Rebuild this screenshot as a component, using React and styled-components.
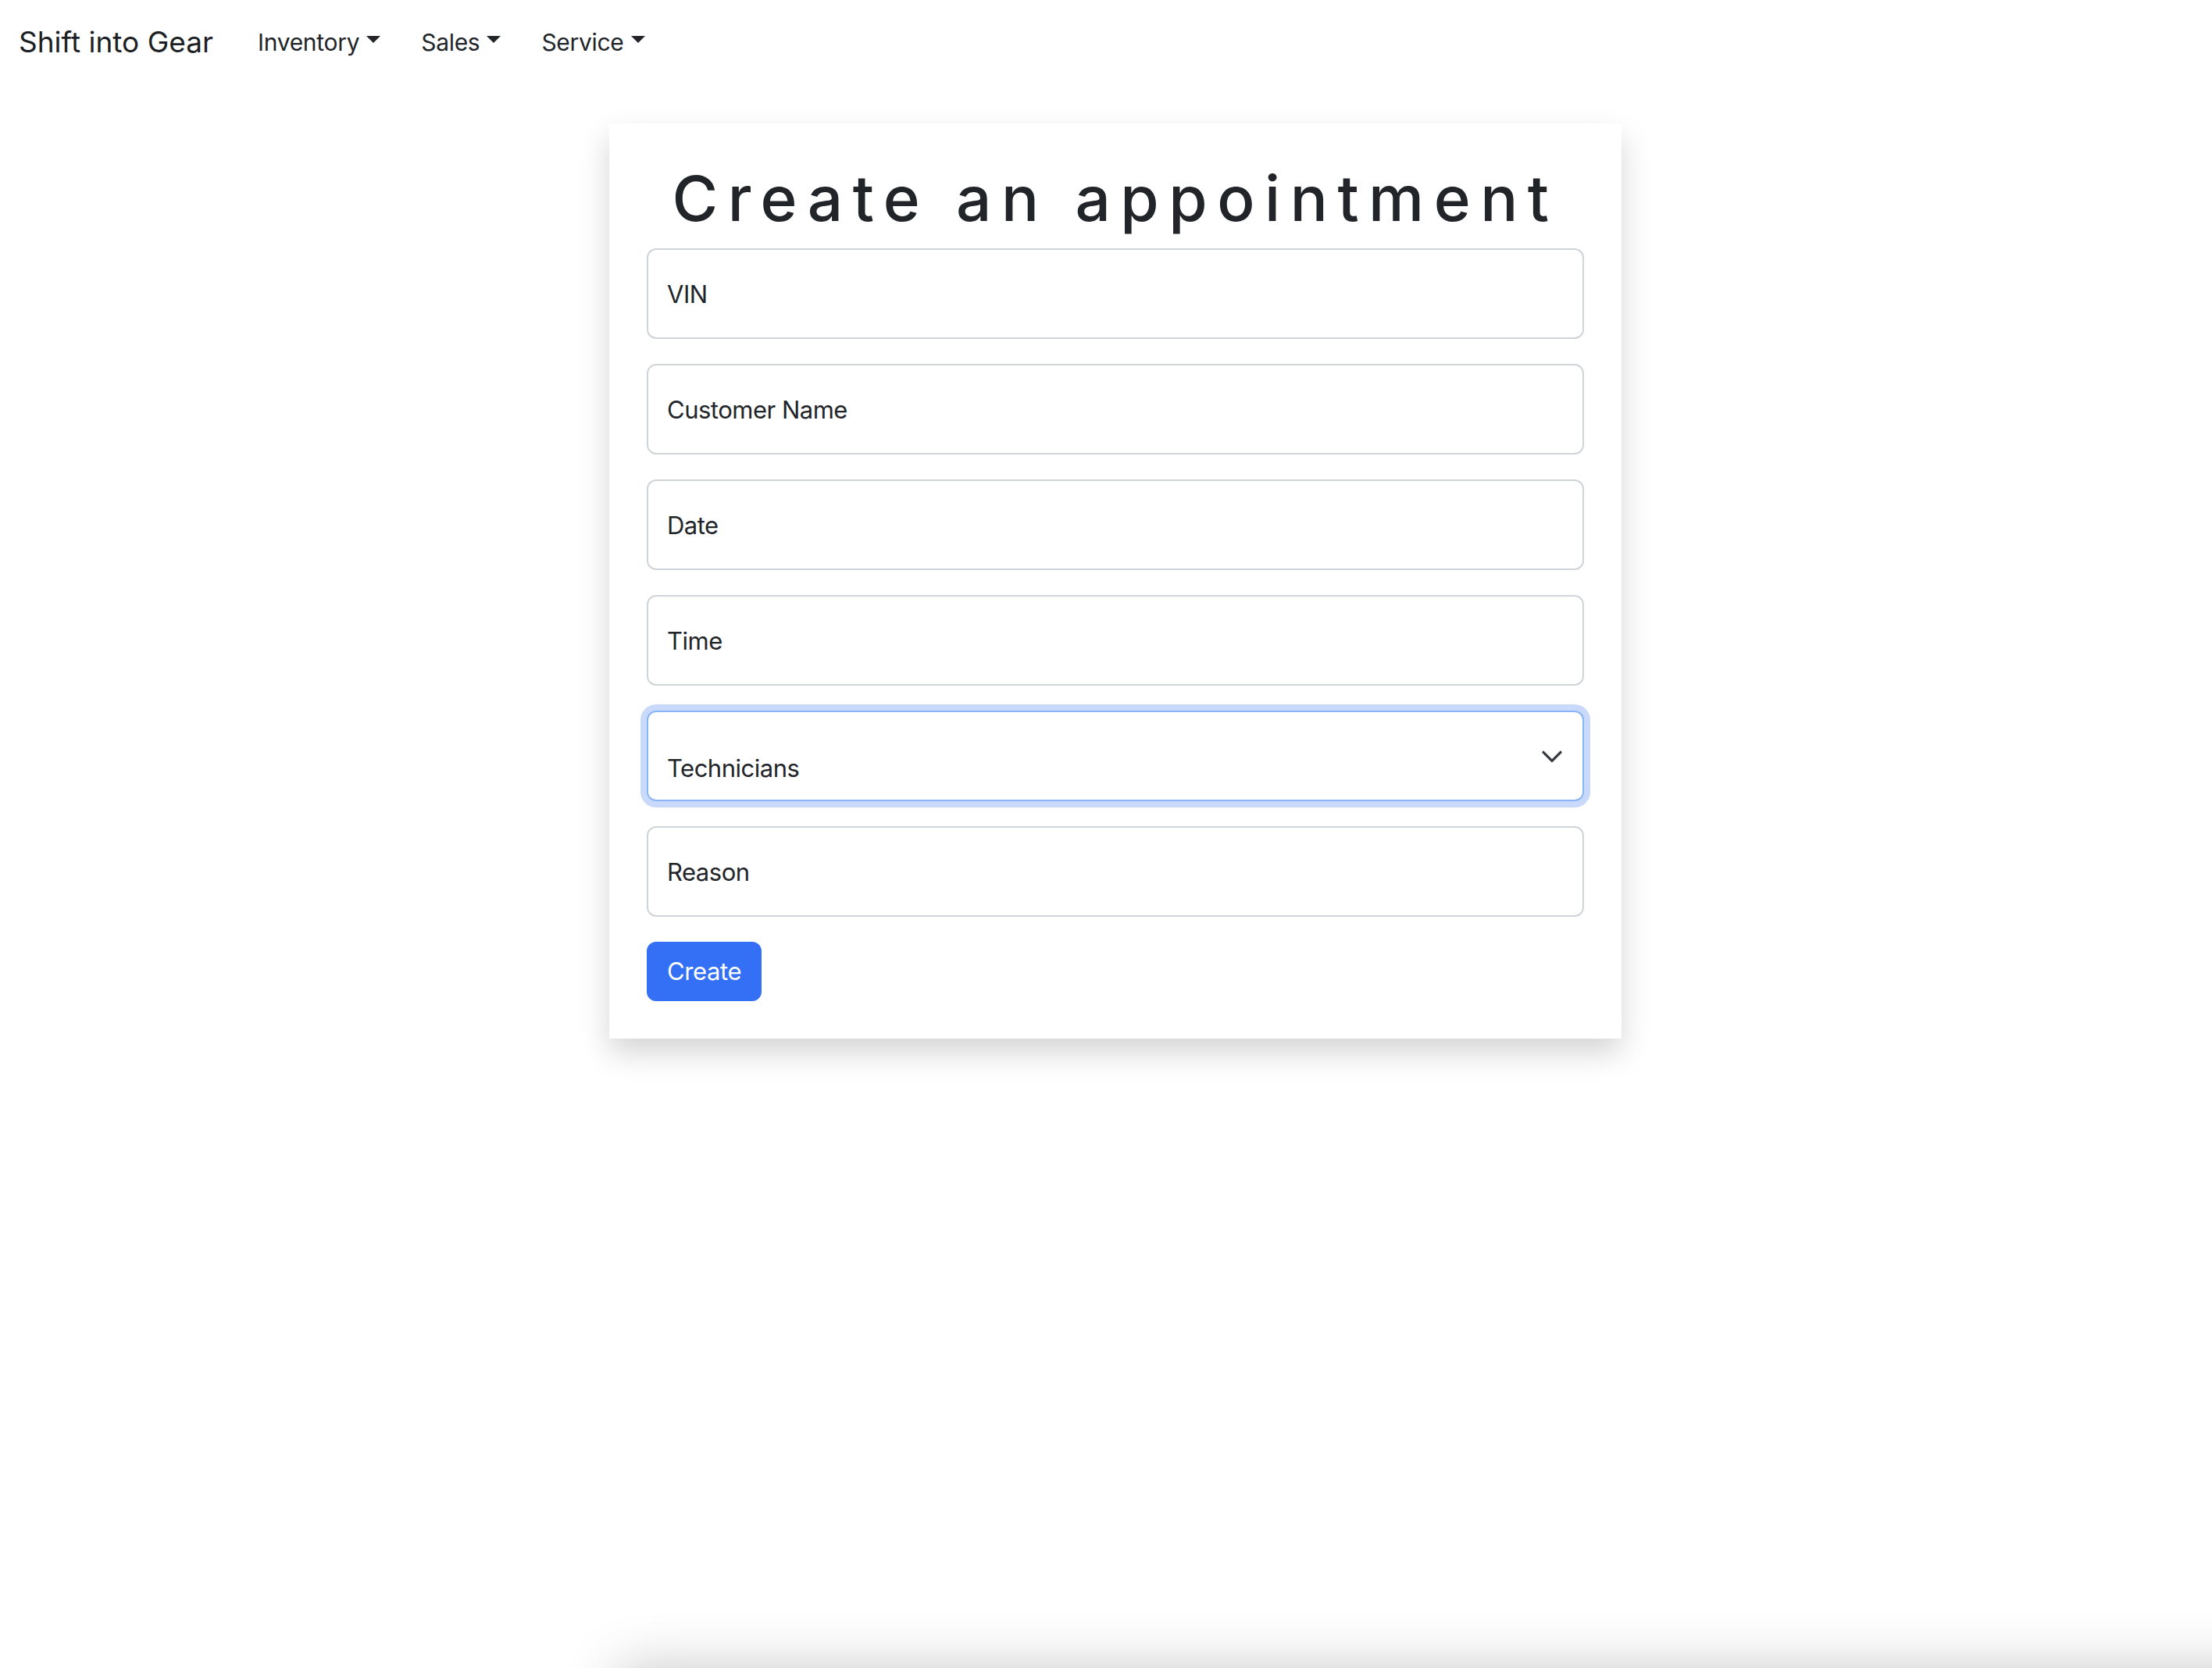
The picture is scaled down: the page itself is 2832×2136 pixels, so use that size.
import React from 'react';
import styled, { createGlobalStyle } from 'styled-components';

const GlobalStyle = createGlobalStyle`
  html, body {
    margin: 0;
    padding: 0;
    background: #fff;
    min-height: 100%;
  }
  body {
    font-family: Inter, "Liberation Sans", Arial, sans-serif;
    color: #212529;
  }
  * {
    box-sizing: border-box;
  }
`;

const navItems = ['Inventory', 'Sales', 'Service'];
const fields = ['VIN', 'Customer Name', 'Date', 'Time'];

const App = () => {
  return (
    <>
      <GlobalStyle />
      <Navbar>
        <Brand href="#">Shift into Gear</Brand>
        <NavList>
          {navItems.map((item) => (
            <li key={item}>
              <NavLink href="#">
                {item}
                <Caret />
              </NavLink>
            </li>
          ))}
        </NavList>
      </Navbar>

      <Main>
        <Card>
          <Title>Create an appointment</Title>
          <Form onSubmit={(e) => e.preventDefault()}>
            {fields.map((f) => (
              <TextField key={f} type="text" placeholder={f} />
            ))}
            <SelectWrap>
              <Select defaultValue="" focused>
                <option value="">Technicians</option>
              </Select>
              <Chevron viewBox="0 0 16 12" aria-hidden="true">
                <path
                  d="M2 4l6 6 6-6"
                  fill="none"
                  stroke="#343a40"
                  strokeWidth="1.8"
                  strokeLinecap="round"
                  strokeLinejoin="round"
                />
              </Chevron>
            </SelectWrap>
            <TextField type="text" placeholder="Reason" />
            <SubmitButton type="submit">Create</SubmitButton>
          </Form>
        </Card>
      </Main>

      <WindowEdge />
    </>
  );
};

const Navbar = styled.nav`
  display: flex;
  align-items: center;
  padding: 16px 24px;
`;

const Brand = styled.a`
  font-size: 37px;
  line-height: 60px;
  padding: 8px 0 12px;
  margin-right: 31px;
  color: #1c1f23;
  text-decoration: none;
  white-space: nowrap;
`;

const NavList = styled.ul`
  display: flex;
  list-style: none;
  margin: 0;
  padding: 0;
`;

const NavLink = styled.a`
  display: block;
  font-size: 30px;
  letter-spacing: -0.3px;
  line-height: 48px;
  padding: 14px 26px 18px;
  color: #212529;
  text-decoration: none;
  white-space: nowrap;
`;

const Caret = styled.span`
  display: inline-block;
  margin-left: 9px;
  vertical-align: 10px;
  border-top: 9px solid #212529;
  border-left: 9px solid transparent;
  border-right: 9px solid transparent;
`;

const Main = styled.main`
  display: flex;
  justify-content: center;
  align-items: flex-start;
  padding: 46px 0 160px 24px;
`;

const Card = styled.div`
  width: 1296px;
  padding: 48px;
  background: #fff;
  box-shadow: 0 18px 36px rgba(0, 0, 0, 0.17);
`;

const Title = styled.h1`
  margin: 0 0 16px;
  font-size: 80px;
  font-weight: 500;
  line-height: 96px;
  letter-spacing: 12.5px;
  text-align: center;
  color: #212529;
`;

const Form = styled.form`
  display: flex;
  flex-direction: column;
  gap: 32px;
`;

const TextField = styled.input`
  display: block;
  width: 100%;
  height: 116px;
  padding: 0 24px;
  font-family: inherit;
  font-size: 31px;
  letter-spacing: -0.5px;
  color: #212529;
  background: #fff;
  border: 2px solid #ced4da;
  border-radius: 12px;
  outline: none;

  &::placeholder {
    color: #212529;
    opacity: 1;
  }
`;

const SelectWrap = styled.div`
  position: relative;
`;

const Select = styled.select`
  display: block;
  width: 100%;
  height: 116px;
  padding: 48px 72px 24px 24px;
  font-family: inherit;
  font-size: 31px;
  letter-spacing: -0.5px;
  line-height: 48px;
  color: #212529;
  background: #fff;
  border: 2px solid ${(p) => (p.focused ? '#88b4f8' : '#ced4da')};
  border-radius: 12px;
  box-shadow: ${(p) => (p.focused ? '0 0 0 8px #c9d9fb' : 'none')};
  appearance: none;
  -webkit-appearance: none;
  outline: none;
`;

const Chevron = styled.svg`
  position: absolute;
  right: 26px;
  top: 50%;
  width: 30px;
  height: 22px;
  margin-top: -12px;
  pointer-events: none;
`;

const SubmitButton = styled.button`
  align-self: flex-start;
  padding: 12px 24px;
  font-family: inherit;
  font-size: 31px;
  letter-spacing: -0.4px;
  line-height: 48px;
  color: #fff;
  background: #3470f6;
  border: 2px solid #3470f6;
  border-radius: 12px;
  cursor: pointer;
`;

const WindowEdge = styled.div`
  position: fixed;
  left: 790px;
  right: -100px;
  top: 100%;
  height: 200px;
  box-shadow: 0 0 70px rgba(0, 0, 0, 0.22);
  pointer-events: none;
`;

export default App;
